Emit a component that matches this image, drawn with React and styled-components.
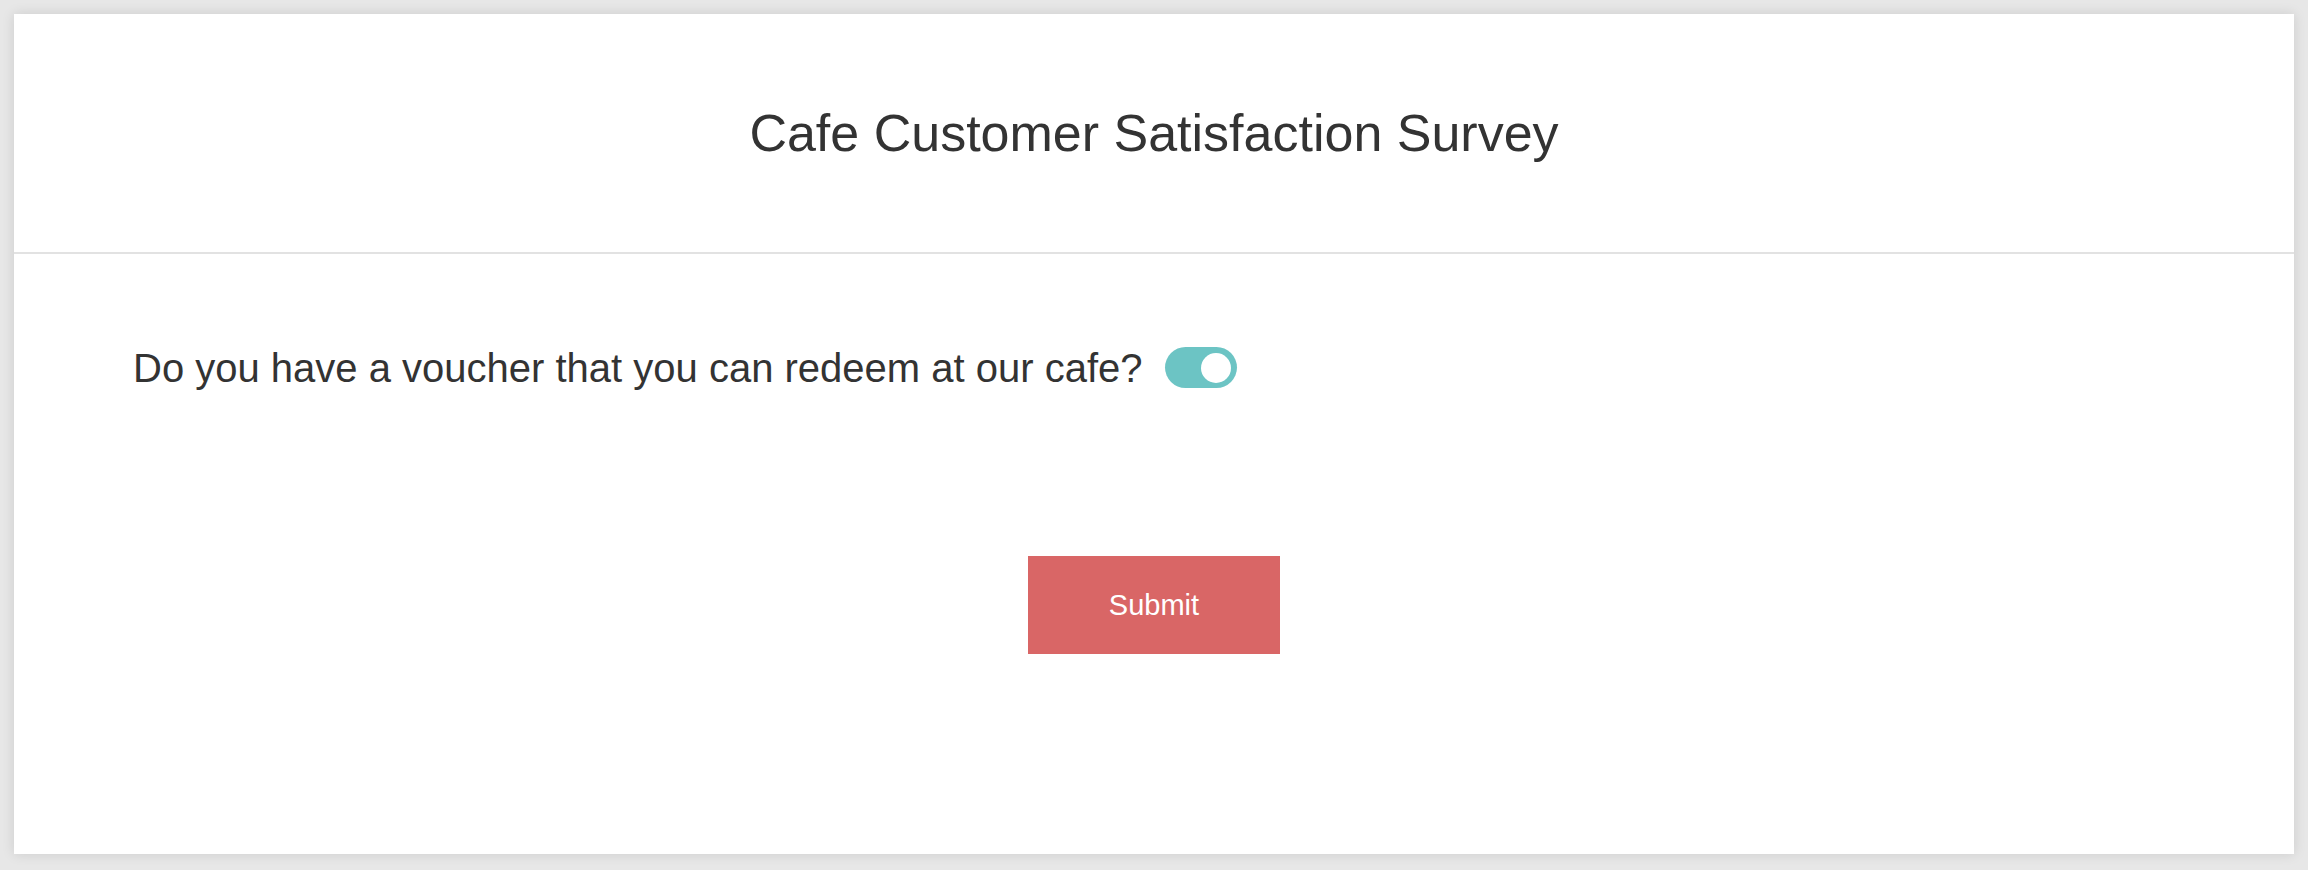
import React, { useState } from "react";
import styled, { createGlobalStyle } from "styled-components";

const GlobalStyle = createGlobalStyle`
  html, body {
    margin: 0;
    padding: 0;
    background: #e7e7e7;
    font-family: "Liberation Sans", Arial, sans-serif;
    color: #333333;
  }
  * { box-sizing: border-box; }
`;

const Page = styled.div`
  padding: 14px 14px 16px 14px;
  min-height: 870px;
`;

const Card = styled.div`
  background: #ffffff;
  height: 840px;
  box-shadow: 0 0 12px rgba(0, 0, 0, 0.12);
  display: flex;
  flex-direction: column;
`;

const Header = styled.header`
  height: 240px;
  padding-top: 89px;
  border-bottom: 2px solid #e2e2e2;
  display: flex;
  justify-content: center;
`;

const Title = styled.h1`
  margin: 0;
  font-size: 52px;
  font-weight: 400;
  line-height: normal;
  color: #333333;
`;

const Body = styled.div`
  display: flex;
  flex-direction: column;
  padding: 91px 119px 0 119px;
`;

const QuestionRow = styled.label`
  display: flex;
  align-items: center;
  gap: 22px;
  height: 46px;
`;

const QuestionText = styled.span`
  font-size: 40px;
  line-height: 46px;
  color: #333333;
`;

const Switch = styled.button`
  width: 72px;
  height: 41px;
  border: none;
  border-radius: 21px;
  padding: 0 6px;
  background: ${(p) => (p.$on ? "#6cc4c4" : "#cccccc")};
  display: flex;
  align-items: center;
  justify-content: ${(p) => (p.$on ? "flex-end" : "flex-start")};
  cursor: pointer;
  margin-top: -1px;
`;

const Knob = styled.span`
  width: 30px;
  height: 30px;
  border-radius: 50%;
  background: #ffffff;
`;

const Actions = styled.div`
  display: flex;
  justify-content: center;
  margin-top: 165px;
`;

const SubmitButton = styled.button`
  width: 252px;
  height: 98px;
  border: none;
  background: #d96666;
  color: #ffffff;
  font-family: "Liberation Sans", Arial, sans-serif;
  font-size: 29px;
  cursor: pointer;
  padding: 0;
`;

export default function App() {
  const [on, setOn] = useState(true);
  return (
    <>
      <GlobalStyle />
      <Page>
        <Card>
          <Header>
            <Title>Cafe Customer Satisfaction Survey</Title>
          </Header>
          <Body>
            <QuestionRow>
              <QuestionText>Do you have a voucher that you can redeem at our cafe?</QuestionText>
              <Switch type="button" $on={on} onClick={() => setOn(!on)} aria-pressed={on}>
                <Knob />
              </Switch>
            </QuestionRow>
            <Actions>
              <SubmitButton type="button">Submit</SubmitButton>
            </Actions>
          </Body>
        </Card>
      </Page>
    </>
  );
}
